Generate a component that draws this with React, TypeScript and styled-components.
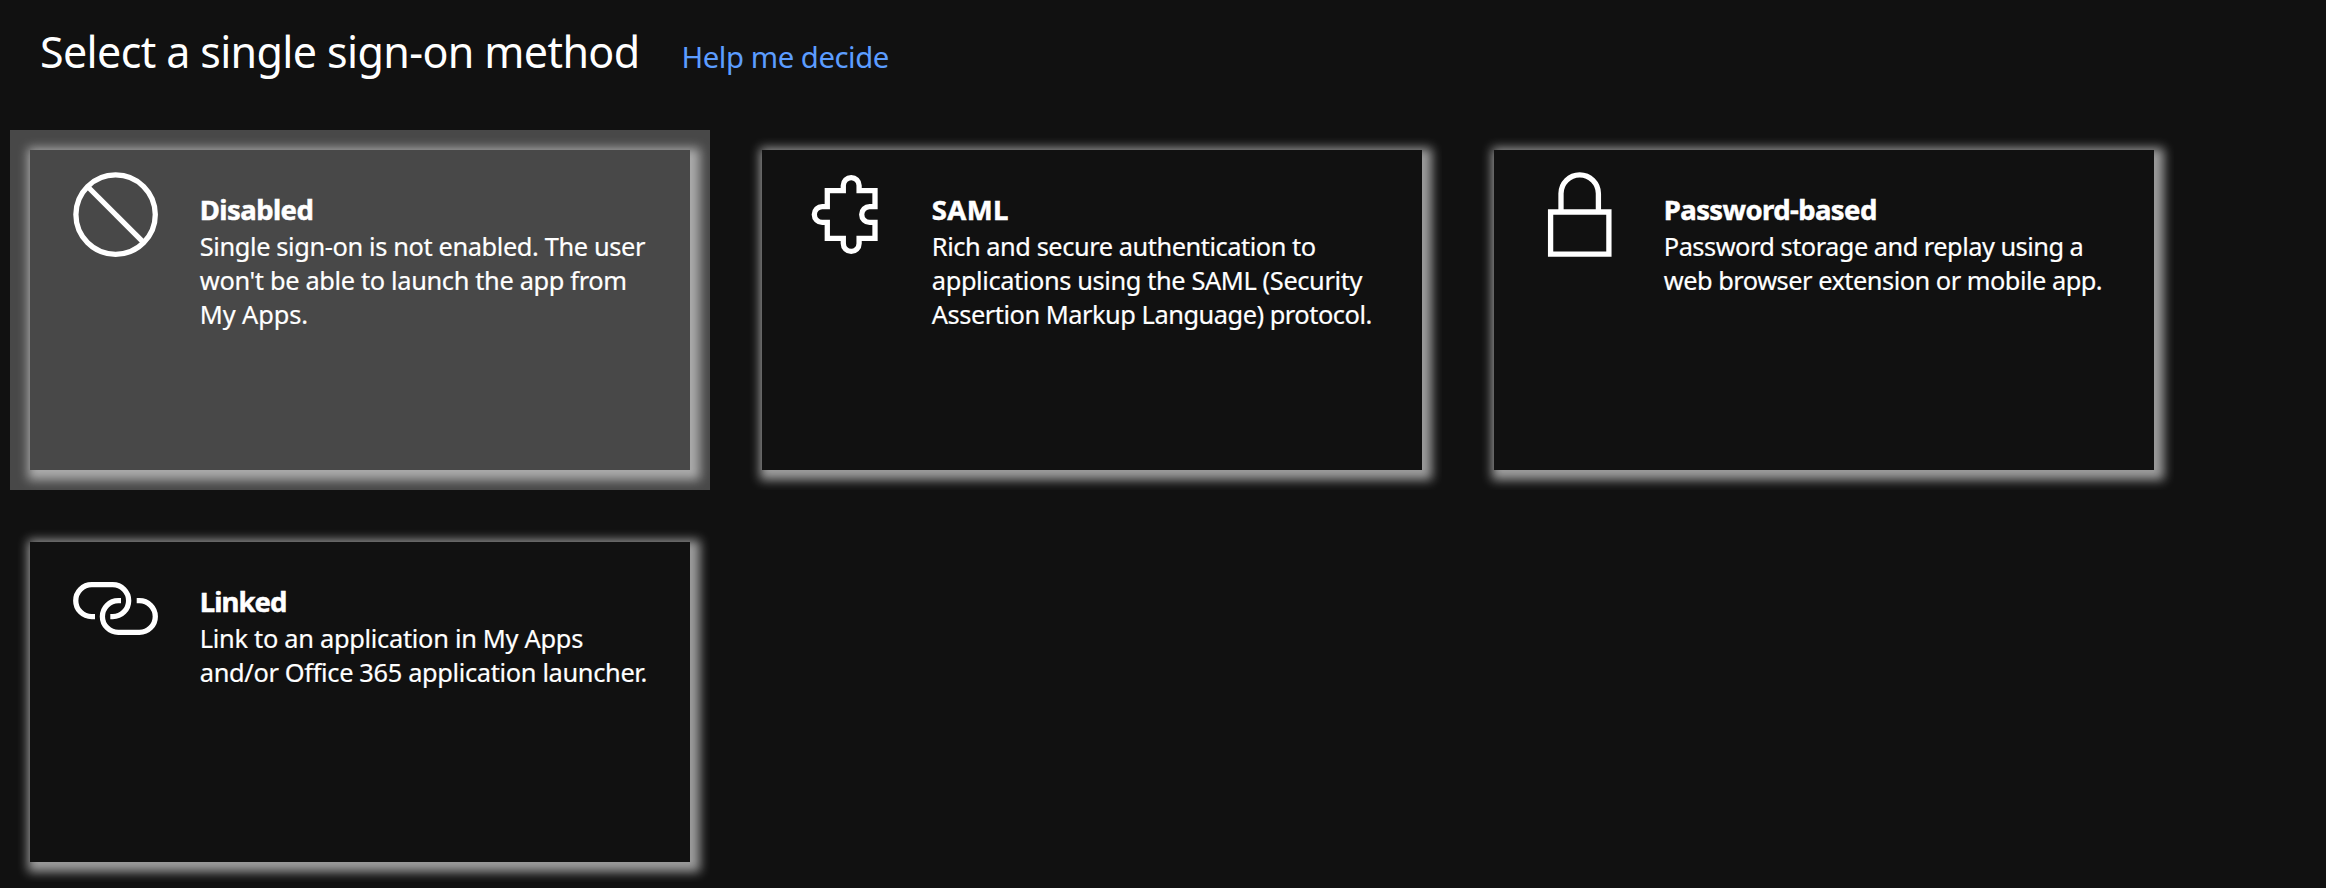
import React from 'react';
import styled, { createGlobalStyle } from 'styled-components';

const GlobalStyle = createGlobalStyle`
  *, *::before, *::after { box-sizing: border-box; }
  html, body { margin: 0; background: #111111; }
  body { font-family: 'Noto Sans', 'Open Sans', sans-serif; color: #ffffff; }
`;

const Page = styled.main`
  width: 100%;
  height: 888px;
  overflow: hidden;
  background: #111111;
`;

const Header = styled.header`
  display: flex;
  align-items: baseline;
  gap: 42px;
  height: 130px;
  padding: 23px 0 0 40px;
`;

const Title = styled.h1`
  margin: 0;
  font-size: 43px;
  font-weight: 400;
  line-height: 58px;
  letter-spacing: -0.63px;
  white-space: nowrap;
`;

const HelpLink = styled.a`
  color: #5c9dff;
  font-size: 29.3px;
  line-height: 40px;
  letter-spacing: -0.454px;
  text-decoration: none;
  white-space: nowrap;
`;

const Grid = styled.div`
  display: grid;
  grid-template-columns: repeat(3, 700px);
  grid-auto-rows: 360px;
  gap: 32px;
  padding-left: 10px;
`;

const Cell = styled.div<{ $selected?: boolean }>`
  padding: 20px;
  overflow: hidden;
  background: ${(p) => (p.$selected ? '#484848' : '#111111')};
`;

const Card = styled.article`
  display: flex;
  height: 320px;
  padding-left: 43px;
  box-shadow: 4px 4px 10px 6px rgba(204, 204, 204, 0.75);
`;

const Icon = styled.svg`
  flex: none;
  width: 86px;
  height: 86px;
  margin: 22px 40.8px 0 0;
  fill: none;
  stroke: #ffffff;
  stroke-width: 5.3px;
`;

const Copy = styled.div`
  padding-top: 41px;
`;

const Heading = styled.h2<{ $tracking: number }>`
  margin: 0;
  font-size: 27.5px;
  font-weight: 700;
  line-height: 38px;
  letter-spacing: ${(p) => p.$tracking}px;
  -webkit-text-stroke: 0.5px #ffffff;
`;

const Description = styled.p`
  margin: 0;
  font-size: 25.4px;
  line-height: 34px;
  -webkit-text-stroke: 0.2px #ffffff;
`;

const Line = styled.span<{ $tracking: number }>`
  display: block;
  white-space: nowrap;
  letter-spacing: ${(p) => p.$tracking}px;
`;

type Method = {
  name: string;
  tracking: number;
  lines: [string, number][];
  selected?: boolean;
  icon: React.ReactNode;
};

const methods: Method[] = [
  {
    name: 'Disabled',
    tracking: -0.57,
    selected: true,
    lines: [
      ['Single sign-on is not enabled. The user', -0.39],
      ["won't be able to launch the app from", -0.35],
      ['My Apps.', -0.1],
    ],
    icon: (
      <>
        <circle cx="42.6" cy="42.6" r="39.7" />
        <path d="M14.5 14.5 70.7 70.7" />
      </>
    ),
  },
  {
    name: 'SAML',
    tracking: 0.4,
    lines: [
      ['Rich and secure authentication to', -0.46],
      ['applications using the SAML (Security', -0.39],
      ['Assertion Markup Language) protocol.', -0.48],
    ],
    icon: (
      <path d="M22.3 18.6H38.3V13.5A7.9 7.9 0 0 1 54.1 13.5V18.6H70V34.6H64.6A7.9 7.9 0 0 0 64.6 50.4H70V66.3H54.1V71.5A7.9 7.9 0 0 1 38.3 71.5V66.3H22.3V50.4H17.2A7.9 7.9 0 0 1 17.2 34.6H22.3Z" />
    ),
  },
  {
    name: 'Password-based',
    tracking: -0.6,
    lines: [
      ['Password storage and replay using a', -0.524],
      ['web browser extension or mobile app.', -0.51],
    ],
    icon: (
      <>
        <path d="M13.6 40H71.9V67V82.2H13.6Z" />
        <path d="M24 40V21.6A18.7 18.7 0 0 1 61.4 21.6V40" />
      </>
    ),
  },
  {
    name: 'Linked',
    tracking: -0.95,
    lines: [
      ['Link to an application in My Apps', -0.29],
      ['and/or Office 365 application launcher.', -0.345],
    ],
    icon: (
      <>
        <path d="M22 52.6H18.7A15.95 15.95 0 0 1 18.7 20.7H39.7A15.95 15.95 0 0 1 39.7 52.6H37.3" />
        <path d="M48 36.6H45.3A15.9 15.9 0 0 0 45.3 68.4H66.4A15.9 15.9 0 0 0 66.4 36.6H63.7" />
      </>
    ),
  },
];

export default function App() {
  return (
    <Page>
      <GlobalStyle />
      <Header>
        <Title>Select a single sign-on method</Title>
        <HelpLink>Help me decide</HelpLink>
      </Header>
      <Grid>
        {methods.map((m) => (
          <Cell key={m.name} $selected={m.selected}>
            <Card>
              <Icon viewBox="0 0 86 86" aria-hidden="true">
                {m.icon}
              </Icon>
              <Copy>
                <Heading $tracking={m.tracking}>{m.name}</Heading>
                <Description>
                  {m.lines.map(([text, tracking]) => (
                    <Line key={text} $tracking={tracking}>
                      {text}
                    </Line>
                  ))}
                </Description>
              </Copy>
            </Card>
          </Cell>
        ))}
      </Grid>
    </Page>
  );
}
